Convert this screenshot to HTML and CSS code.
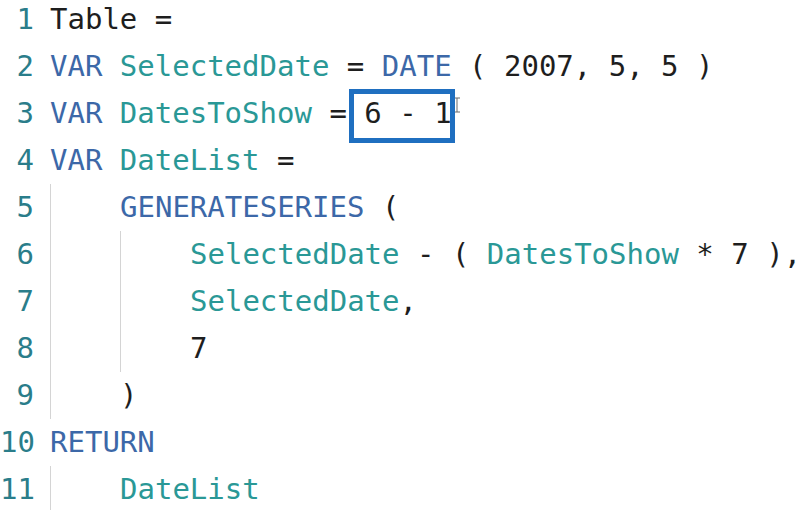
FILE: index.html
```html
<!DOCTYPE html>
<html>
<head>
<meta charset="utf-8">
<link rel="stylesheet" href="styles.css">
</head>
<body>
<div class="editor">
  <div class="line"><span class="ln">1</span><span class="code">Table =</span></div>
  <div class="line"><span class="ln">2</span><span class="code"><span class="kw">VAR</span> <span class="var">SelectedDate</span> = <span class="kw">DATE</span> ( 2007, 5, 5 )</span></div>
  <div class="line"><span class="ln">3</span><span class="code"><span class="kw">VAR</span> <span class="var">DatesToShow</span> = <span class="hl">6 - 1<svg class="caret" width="7" height="16" viewBox="0 0 7 16"><path d="M1 1h2v14h-2M4 1h2M4 15h2M3 1h1M3 15h1" fill="none" stroke="#6a6a6a" stroke-width="1"/></svg></span></span></div>
  <div class="line"><span class="ln">4</span><span class="code"><span class="kw">VAR</span> <span class="var">DateList</span> =</span></div>
  <div class="line"><span class="ln">5</span><span class="code"><span class="ind"></span><span class="kw">GENERATESERIES</span> (</span></div>
  <div class="line"><span class="ln">6</span><span class="code"><span class="ind"></span><span class="ind"></span><span class="var">SelectedDate</span> - ( <span class="var">DatesToShow</span> * 7 ),</span></div>
  <div class="line"><span class="ln">7</span><span class="code"><span class="ind"></span><span class="ind"></span><span class="var">SelectedDate</span>,</span></div>
  <div class="line"><span class="ln">8</span><span class="code"><span class="ind"></span><span class="ind"></span>7</span></div>
  <div class="line"><span class="ln">9</span><span class="code"><span class="ind"></span>)</span></div>
  <div class="line"><span class="ln">10</span><span class="code"><span class="kw">RETURN</span></span></div>
  <div class="line"><span class="ln">11</span><span class="code"><span class="ind"></span><span class="var">DateList</span></span></div>
</div>
</body>
</html>
```

FILE: styles.css
```css
html, body {
  margin: 0;
  padding: 0;
  background: #ffffff;
  overflow: hidden;
}

.editor {
  margin-top: -4px;
  font-family: "DejaVu Sans Mono", "Liberation Mono", monospace;
  font-size: 29px;
  line-height: 47px;
  color: #1e1e1e;
}

.line {
  display: flex;
  height: 47px;
}

.ln {
  width: 34px;
  text-align: right;
  color: #2a7d8a;
  margin-right: 16px;
  flex: none;
}

.code {
  display: block;
  white-space: pre;
}

.ind {
  display: inline-block;
  vertical-align: top;
  width: 70px;
  height: 47px;
  box-sizing: border-box;
  border-left: 1px solid #d4d4d4;
}

.kw {
  color: #3c68a8;
}

.var {
  color: #2a9896;
}

.hl {
  position: relative;
}

.hl::after {
  content: "";
  position: absolute;
  left: -15px;
  right: -3px;
  top: -7px;
  bottom: -13px;
  border: 5px solid #1f6fc0;
}

.caret {
  position: absolute;
  right: -9px;
  top: 1px;
}
```
